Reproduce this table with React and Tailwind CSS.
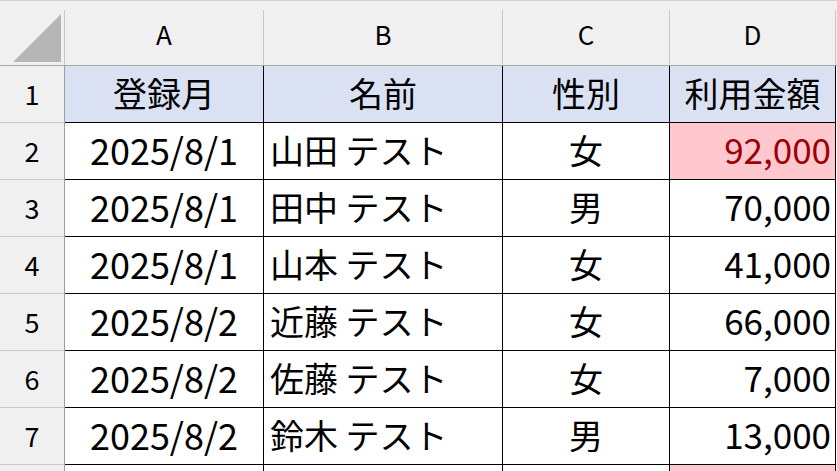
import React from "react";

const cols = [
  { key: "A", w: "w-[199px]" },
  { key: "B", w: "w-[239px]" },
  { key: "C", w: "w-[167px]" },
  { key: "D", w: "w-[166px]" },
];

const rows = [
  { date: "2025/8/1", name: "山田 テスト", sex: "女", amount: "92,000", hot: true },
  { date: "2025/8/1", name: "田中 テスト", sex: "男", amount: "70,000" },
  { date: "2025/8/1", name: "山本 テスト", sex: "女", amount: "41,000" },
  { date: "2025/8/2", name: "近藤 テスト", sex: "女", amount: "66,000" },
  { date: "2025/8/2", name: "佐藤 テスト", sex: "女", amount: "7,000" },
  { date: "2025/8/2", name: "鈴木 テスト", sex: "男", amount: "13,000" },
];

const font = { fontFamily: '"Noto Sans CJK JP", "Noto Sans", sans-serif' };

const RowHead = ({ children }) => (
  <div className="w-[65px] h-[57px] shrink-0 bg-[#f0f0f0] border-r border-b border-r-[#9e9e9e] border-b-[#c8c8c8] flex items-center justify-center text-[27px] text-black">
    {children}
  </div>
);

const App = () => {
  return (
    <div className="w-[837px] h-[471px] overflow-hidden bg-white" style={font}>
      {/* formula bar edge */}
      <div className="h-[10px] bg-[#f0f0f0] border-t border-[#d2d2d2]" />

      {/* column headers */}
      <div className="flex h-[56px] bg-[#f0f0f0] border-b border-[#a6a6a6]">
        <div className="w-[65px] shrink-0 border-r border-[#c8c8c8] relative">
          <svg className="absolute left-[13px] top-[4px]" width="48" height="48" viewBox="0 0 48 48">
            <polygon points="48,0 48,48 0,48" fill="#b6b6b6" />
          </svg>
        </div>
        {cols.map((c) => (
          <div
            key={c.key}
            className={`${c.w} shrink-0 border-r border-[#c8c8c8] flex items-center justify-center pb-[8px] text-[26px] text-black`}
          >
            {c.key}
          </div>
        ))}
        <div className="flex-1" />
      </div>

      {/* header row 1 */}
      <div className="flex h-[57px]">
        <RowHead>1</RowHead>
        {["登録月", "名前", "性別", "利用金額"].map((t, i) => (
          <div
            key={t}
            className={`${cols[i].w} shrink-0 bg-[#d9e1f2] border-r border-b border-black flex items-center justify-center pb-[3px] text-[34px] text-black`}
          >
            {t}
          </div>
        ))}
        <div className="flex-1 border-b border-[#e0e0e0]" />
      </div>

      {rows.map((r, i) => (
        <div key={i} className="flex h-[57px]">
          <RowHead>{i + 2}</RowHead>
          <div className="w-[199px] shrink-0 border-r border-b border-black flex items-center justify-center pb-[4px] text-[36px] text-black">
            {r.date}
          </div>
          <div className="w-[239px] shrink-0 border-r border-b border-black flex items-center pl-[6px] pb-[4px] text-[34px] text-black">
            {r.name}
          </div>
          <div className="w-[167px] shrink-0 border-r border-b border-black flex items-center justify-center pb-[4px] text-[34px] text-black">
            {r.sex}
          </div>
          <div
            className={`w-[166px] shrink-0 border-r border-b border-black flex items-center justify-end pr-[4px] pb-[4px] text-[35px] ${
              r.hot ? "bg-[#ffc7ce] text-[#9c0006]" : "text-black"
            }`}
          >
            {r.amount}
          </div>
          <div className="flex-1 border-b border-[#e0e0e0]" />
        </div>
      ))}

      {/* row 8, cut off by the window */}
      <div className="flex h-[57px]">
        <div className="w-[65px] shrink-0 bg-[#f0f0f0] border-r border-[#9e9e9e]" />
        <div className="w-[199px] shrink-0 border-r border-black" />
        <div className="w-[239px] shrink-0 border-r border-black" />
        <div className="w-[167px] shrink-0 border-r border-black" />
        <div className="w-[166px] shrink-0 border-r border-black bg-[#ffc7ce]" />
        <div className="flex-1" />
      </div>
    </div>
  );
};

export default App;
